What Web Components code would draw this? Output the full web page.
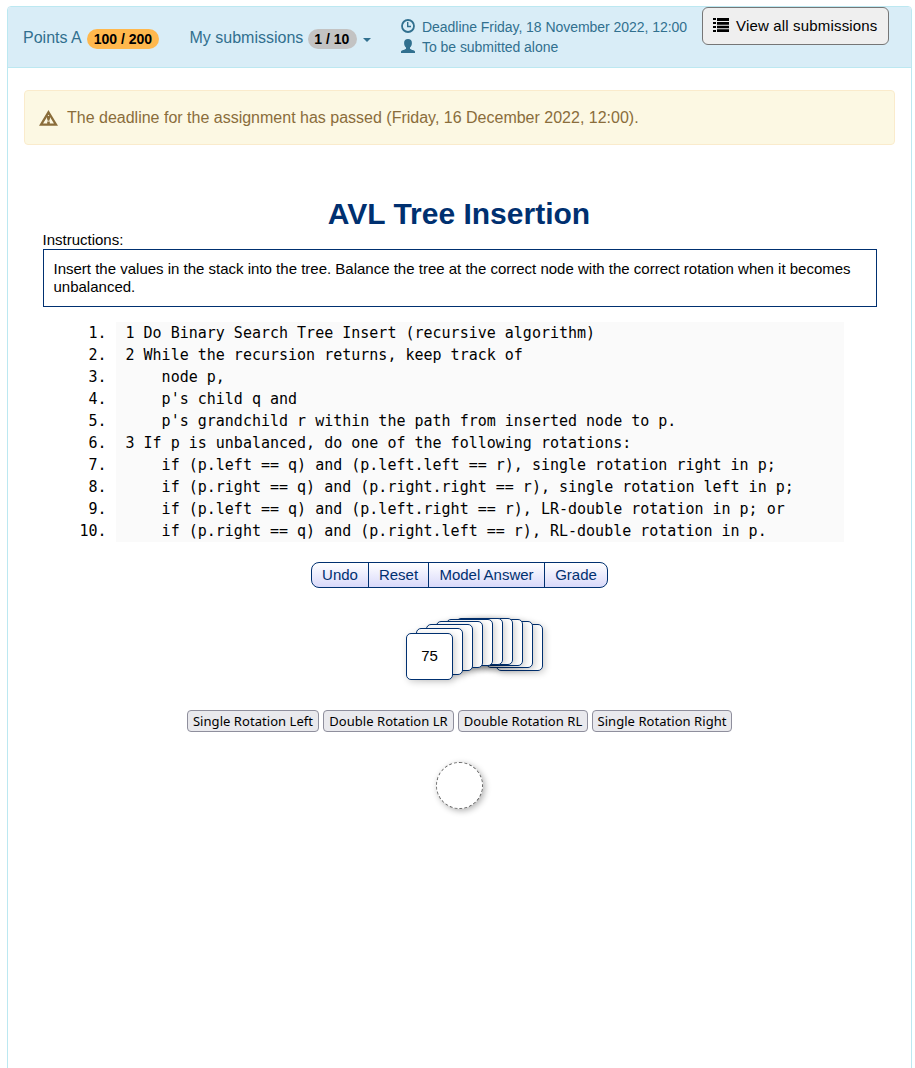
<!DOCTYPE html>
<html lang="en">
<head>
<meta charset="utf-8">
<title>AVL Tree Insertion</title>
<style>
html,body{margin:0;height:100%;background:#fff}
body{font:16px/22px "Liberation Sans",Arial,sans-serif;color:#000;overflow:hidden}
</style>
</head>
<body>
<exercise-panel>
  <submission-bar slot="header"></submission-bar>
  <deadline-alert>The deadline for the assignment has passed (Friday, 16 December 2022, 12:00).</deadline-alert>
  <avl-exercise></avl-exercise>
</exercise-panel>
<script>
function define(name, html, setup){
  const t=document.createElement('template');
  t.innerHTML=html;
  customElements.define(name, class extends HTMLElement{
    constructor(){
      super();
      this.attachShadow({mode:'open'}).append(t.content.cloneNode(true));
      if(setup) setup(this.shadowRoot,this);
    }
  });
}

define('exercise-panel', `<style>
:host{display:block;box-sizing:border-box;height:1100px;margin:6px 3px 0 7px;border:1px solid #bce8f1;border-radius:4px;overflow:hidden}
main{padding:22px 16px 0}
</style><slot name="header"></slot><main><slot></slot></main>`);

define('count-badge', `<style>
:host{display:inline-block;box-sizing:border-box;height:20px;border-radius:10px;padding:0 7px;font:bold 14px/20px "Liberation Sans",Arial,sans-serif;color:#000;text-align:center;white-space:nowrap;background:var(--badge,#c3c3c3)}
</style><slot></slot>`);

define('submission-bar', `<style>
:host{display:flex;box-sizing:border-box;height:61px;background:#d9edf7;border-bottom:1px solid #bce8f1;color:#31708f;align-items:flex-start;padding:0 0 0 15px}
.points,.subs{display:flex;align-items:center;height:22px;margin-top:20px;white-space:nowrap}
.points{width:166.500px}
.subs{width:211.500px}
count-badge{margin:2px 0 0 5px}
.points count-badge{--badge:#ffb84d;width:72px}
.subs count-badge{width:49px;margin-left:4.500px;padding:0 6px 0 5px}
.caret{margin:4px 0 0 6px;border:4px solid transparent;border-top-color:#31708f;border-bottom:0}
.info{width:301px;margin-top:10px;font-size:14px;line-height:20px;white-space:nowrap}
.row{display:flex;align-items:center;gap:7px}
.row span{letter-spacing:-.04px}
.row svg{margin-top:-2px}
svg{display:block;flex:none}
button{display:flex;align-items:center;box-sizing:border-box;width:187px;height:38px;margin:0;padding:0 0 1px 10px;gap:7px;border:1px solid #767676;border-radius:6px;background:#efefef;color:#000;font:15px "Liberation Sans",Arial,sans-serif;letter-spacing:.17px;white-space:nowrap}
button svg{margin-top:-2px}
</style>
<div class="points">Points A <count-badge>100 / 200</count-badge></div>
<div class="subs">My submissions <count-badge>1 / 10</count-badge><i class="caret"></i></div>
<div class="info">
<div class="row"><svg width="14" height="14" viewBox="0 0 14 14" fill="none" stroke="#31708f"><circle cx="7" cy="7" r="6" stroke-width="1.8"/><path d="M6.700 3v4.500H10" stroke-width="1.400"/></svg><span>Deadline Friday, 18 November 2022, 12:00</span></div>
<div class="row"><svg width="14" height="14" viewBox="0 0 14 14" fill="#31708f"><path d="M7 0C4.500 0 3 1.500 3.100 4c0 2 .8 3.500 1.900 4.500v1.300C4.500 10.800.4 10.900 0 12.600V14h14v-1.400c-.4-1.700-4.500-1.800-5-2.800V8.500c1.100-1 1.900-2.500 1.900-4.500C11 1.500 9.500 0 7 0z"/></svg><span>To be submitted alone</span></div>
</div>
<button><svg width="16" height="14" viewBox="0 0 16 14" fill="#000"><path d="M0 0h3v2H0zM4 0h12v3H4zM0 4h3v2H0zM4 4h12v2.700H4zM0 8h3v2H0zM4 7.700h12v2.600H4zM0 12h3v2H0zM4 11.300h12V14H4z"/></svg><span>View all submissions</span></button>`);

define('deadline-alert', `<style>
:host{display:flex;box-sizing:border-box;height:55px;border:1px solid #faebcc;border-radius:4px;background:#fcf8e3;color:#8a6d3b;align-items:center;padding-left:14px;gap:9px;white-space:nowrap}
svg{display:block;flex:none;margin-top:0}
</style><svg width="19" height="16" viewBox="0 0 19 16"><path d="M9.500 2.300 17 14.700H2z" fill="none" stroke="#8a6d3b" stroke-width="2.300"/><path d="M8 6h3v2.500l-.7 2.300H8.700L8 8.500zM8.200 11.500h2.600v2.500H8.200z" fill="#8a6d3b"/></svg><span><slot></slot></span>`);

define('code-listing', `<style>
:host{display:block;margin:15px 33px 0 73px;font:15px/22px "DejaVu Sans Mono",monospace}
.line{background:#fafafa;padding-left:9.500px;height:22px;white-space:pre;position:relative}
.line::before{content:attr(data-n) ".";position:absolute;right:100%;margin-right:9.500px}
</style><div id="c"></div>`, root=>{
  const lines=["1 Do Binary Search Tree Insert (recursive algorithm)",
  "2 While the recursion returns, keep track of",
  "    node p,",
  "    p's child q and",
  "    p's grandchild r within the path from inserted node to p.",
  "3 If p is unbalanced, do one of the following rotations:",
  "    if (p.left == q) and (p.left.left == r), single rotation right in p;",
  "    if (p.right == q) and (p.right.right == r), single rotation left in p;",
  "    if (p.left == q) and (p.left.right == r), LR-double rotation in p; or",
  "    if (p.right == q) and (p.right.left == r), RL-double rotation in p."];
  lines.forEach((s,i)=>{
    const d=document.createElement('div');
    d.className='line'; d.dataset.n=i+1; d.textContent=s;
    root.getElementById('c').append(d);
  });
});

define('control-bar', `<style>
:host{display:flex;box-sizing:border-box;width:297px;height:26px;margin:20px 0 0 268px;border:1px solid #003070;border-radius:8px;overflow:hidden;background:linear-gradient(#fff,#d9d9fa);color:#003070;font-size:15px;line-height:24px}
span{box-sizing:border-box;text-align:center;border-right:1px solid #003070;white-space:nowrap}
span:last-child{border:0}
</style><span style="width:57px">Undo</span><span style="width:60px">Reset</span><span style="width:116px">Model Answer</span><span style="width:62px">Grade</span>`);

define('value-stack', `<style>
:host{display:block;position:relative;width:137px;height:62px;margin:30px 0 0 363px}
b{position:absolute;box-sizing:border-box;width:47px;height:47px;border:1px solid #003070;border-radius:5px;background:#fff;box-shadow:2px 2px 7px rgba(0,0,0,.2);font:15px/43px "Liberation Sans",Arial,sans-serif;text-align:center}
</style>`, root=>{
  const tops=[15,10,6,3,1,0,0,1,3,6];
  for(let i=9;i>=0;i--){
    const b=document.createElement('b');
    b.style.left=i*10+'px'; b.style.top=tops[i]+'px';
    if(i===0) b.textContent='75';
    root.append(b);
  }
});

define('rotation-buttons', `<style>
:host{display:flex;gap:4px;margin:30px 0 0 144px}
button{box-sizing:border-box;height:22px;margin:0;padding:0;border:1px solid #8f8f9d;border-radius:4px;background:#e9e9ed;color:#000;font:13px/21px "Noto Sans","Open Sans",sans-serif;letter-spacing:.05px;white-space:nowrap;display:flex;justify-content:center}
</style><button style="width:132px">Single Rotation Left</button><button style="width:131px">Double Rotation LR</button><button style="width:130px">Double Rotation RL</button><button style="width:140px">Single Rotation Right</button>`);

define('empty-node', `<style>
:host{display:block;box-sizing:border-box;width:47px;height:47px;margin:30px 0 0 393px;border:1px dashed #666;border-radius:50%;background:#fff;box-shadow:2px 2px 6px rgba(0,0,0,.3)}
</style>`);

define('avl-exercise', `<style>
:host{display:block;margin:51px 18px 0 19px;font-size:15px}
h1{margin:0 2px 0 0;font-size:30px;line-height:36px;color:#003070;text-align:center}
.label{line-height:18px;margin:-1px 0 0 -.5px}
.box{box-sizing:border-box;height:58px;border:1px solid #003070;padding:10px 9px 10px 9.500px;line-height:18px}
</style><h1>AVL Tree Insertion</h1>
<div class="label">Instructions:</div>
<div class="box">Insert the values in the stack into the tree. Balance the tree at the correct node with the correct rotation when it becomes unbalanced.</div>
<code-listing></code-listing>
<control-bar></control-bar>
<value-stack></value-stack>
<rotation-buttons></rotation-buttons>
<empty-node></empty-node>`);
</script>
</body>
</html>
